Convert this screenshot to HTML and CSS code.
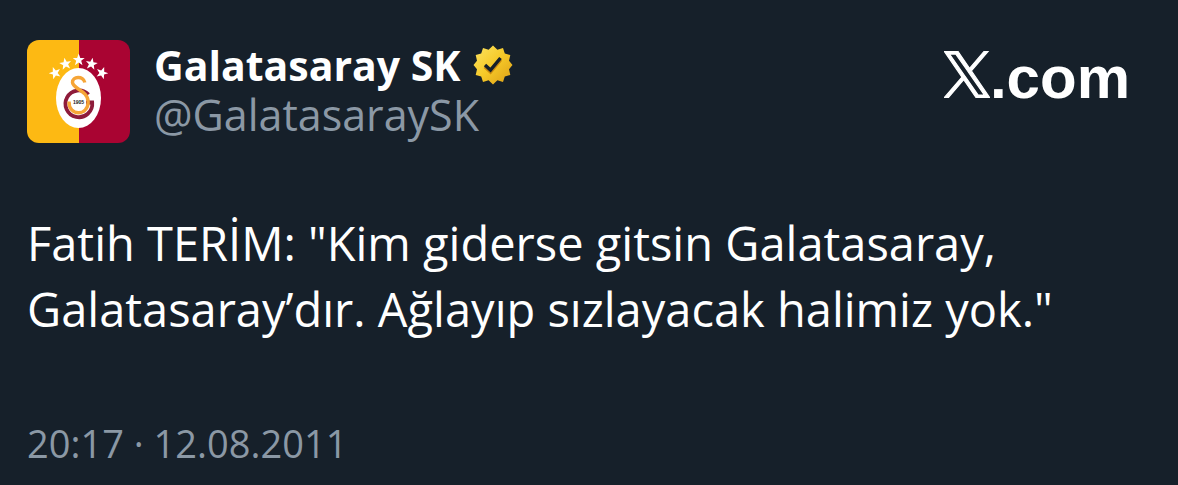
FILE: index.html
```
<!DOCTYPE html>
<html lang="tr">
<head>
    <meta charset="UTF-8">
    <meta name="viewport" content="width=device-width, initial-scale=1">
    <title>Galatasaray SK</title>
    <link rel="stylesheet" href="styles.css">
</head>
<body>
    <article class="post">
        <header class="post-header">
            <svg class="avatar" viewBox="0 0 103 103" role="img" aria-label="Galatasaray SK">
                <rect width="52" height="103" fill="#fdb913"/>
                <rect x="52" width="51" height="103" fill="#a90432"/>
                <ellipse cx="51.5" cy="58" rx="22.5" ry="30" fill="#fff"/>
                <defs>
                    <path id="star" d="M0-6.4 1.6-2 6-2 2.5.8 3.8 5.2 0 2.6-3.8 5.2-2.5.8-6-2-1.6-2Z" fill="#fff"/>
                </defs>
                <use href="#star" transform="translate(28 33) rotate(-20)"/>
                <use href="#star" transform="translate(38.5 24) rotate(-10)"/>
                <use href="#star" transform="translate(51.7 20)"/>
                <use href="#star" transform="translate(64.5 24) rotate(10)"/>
                <use href="#star" transform="translate(75 33) rotate(20)"/>
                <g fill="none" stroke-width="3.8">
                    <path d="M61.5 54.5A13.4 13.4 0 1 0 65.2 62.5H59" stroke="#8e1b3a"/>
                    <path d="M57.8 42.5C56.5 35.5 45.2 36 45.5 42.5C46 49 61 50.5 61.2 62C61 76.5 41.5 76.5 42 61.5" stroke="#f6a536" stroke-width="3.4"/>
                </g>
                <text class="crest-year" x="51.5" y="64" text-anchor="middle">1905</text>
            </svg>
            <div class="author">
                <div class="name-row">
                    <span class="name">Galatasaray SK</span>
                    <svg class="badge" viewBox="0 0 40 40" role="img" aria-label="Onaylı hesap">
                        <defs>
                            <linearGradient id="gold" x1="0" y1="0" x2="1" y2="1">
                                <stop offset="0" stop-color="#fbe463"/>
                                <stop offset=".5" stop-color="#f6c928"/>
                                <stop offset="1" stop-color="#dc9d16"/>
                            </linearGradient>
                        </defs>
                        <path d="M20 .5 24.4 4.7 30 3 31.8 8.6 37.3 10 36 15.7 39.5 20 36 24.3 37.3 30 31.8 31.4 30 37 24.4 35.3 20 39.5 15.6 35.3 10 37 8.2 31.4 2.7 30 4 24.3.5 20 4 15.7 2.7 10 8.2 8.6 10 3 15.6 4.7Z" fill="url(#gold)"/>
                        <path d="M12 21.5 17.5 26.5 27.5 14.5" fill="none" stroke="#c98a10" stroke-width="4"/>
                        <path d="M12 20 17.5 25 27.5 13" fill="none" stroke="#16202a" stroke-width="3.4"/>
                    </svg>
                </div>
                <span class="handle">@GalatasaraySK</span>
            </div>
            <div class="site">
                <svg class="site-logo" viewBox="0 0 1200 1227" role="img" aria-label="X">
                    <path d="M714 519 1161 0H1055L667 451 357 0H0L468 682 0 1226H106L515 750 843 1226H1200ZM569 688 522 620 144 80H307L611 516 659 584 1055 1150H892Z"/>
                </svg>
                <span>.com</span>
            </div>
        </header>
        <p class="post-text">Fatih TERİM: "Kim giderse gitsin Galatasaray, Galatasaray’dır. Ağlayıp sızlayacak halimiz yok."</p>
        <time class="post-time" datetime="2011-08-12T20:17">20:17 · 12.08.2011</time>
    </article>
</body>
</html>
```

FILE: styles.css
```
body {
    margin: 0;
    background: #16202a;
    color: #fff;
    font-family: "Open Sans", "Noto Sans", sans-serif;
}

.post {
    padding: 40px 48px 8px 27px;
}

.post-header {
    display: flex;
    align-items: flex-start;
}

.avatar {
    width: 103px;
    height: 103px;
    border-radius: 12px;
    flex-shrink: 0;
}

.crest-year {
    font-family: "Liberation Sans", sans-serif;
    font-size: 5px;
    font-weight: bold;
    fill: #222;
}

.author {
    margin-left: 24px;
}

.name-row {
    display: flex;
    align-items: center;
    gap: 12px;
}

.name {
    font-size: 41px;
    font-weight: 700;
    line-height: 50px;
}

.badge {
    width: 40px;
    height: 40px;
}

.handle {
    display: block;
    color: #8b98a5;
    font-size: 43px;
    line-height: 50px;
}

.site {
    display: flex;
    align-items: baseline;
    margin-left: auto;
    padding-top: 5px;
    font-family: "Liberation Sans", sans-serif;
    font-size: 60px;
    font-weight: bold;
    line-height: 66px;
}

.site-logo {
    width: 46px;
    height: 47px;
    fill: #fff;
    stroke: #fff;
    stroke-width: 30px;
}

.post-text {
    margin: 67px 0 76px;
    font-size: 47px;
    line-height: 66px;
}

.post-time {
    display: block;
    color: #8b98a5;
    font-size: 38px;
    line-height: 50px;
}
```
